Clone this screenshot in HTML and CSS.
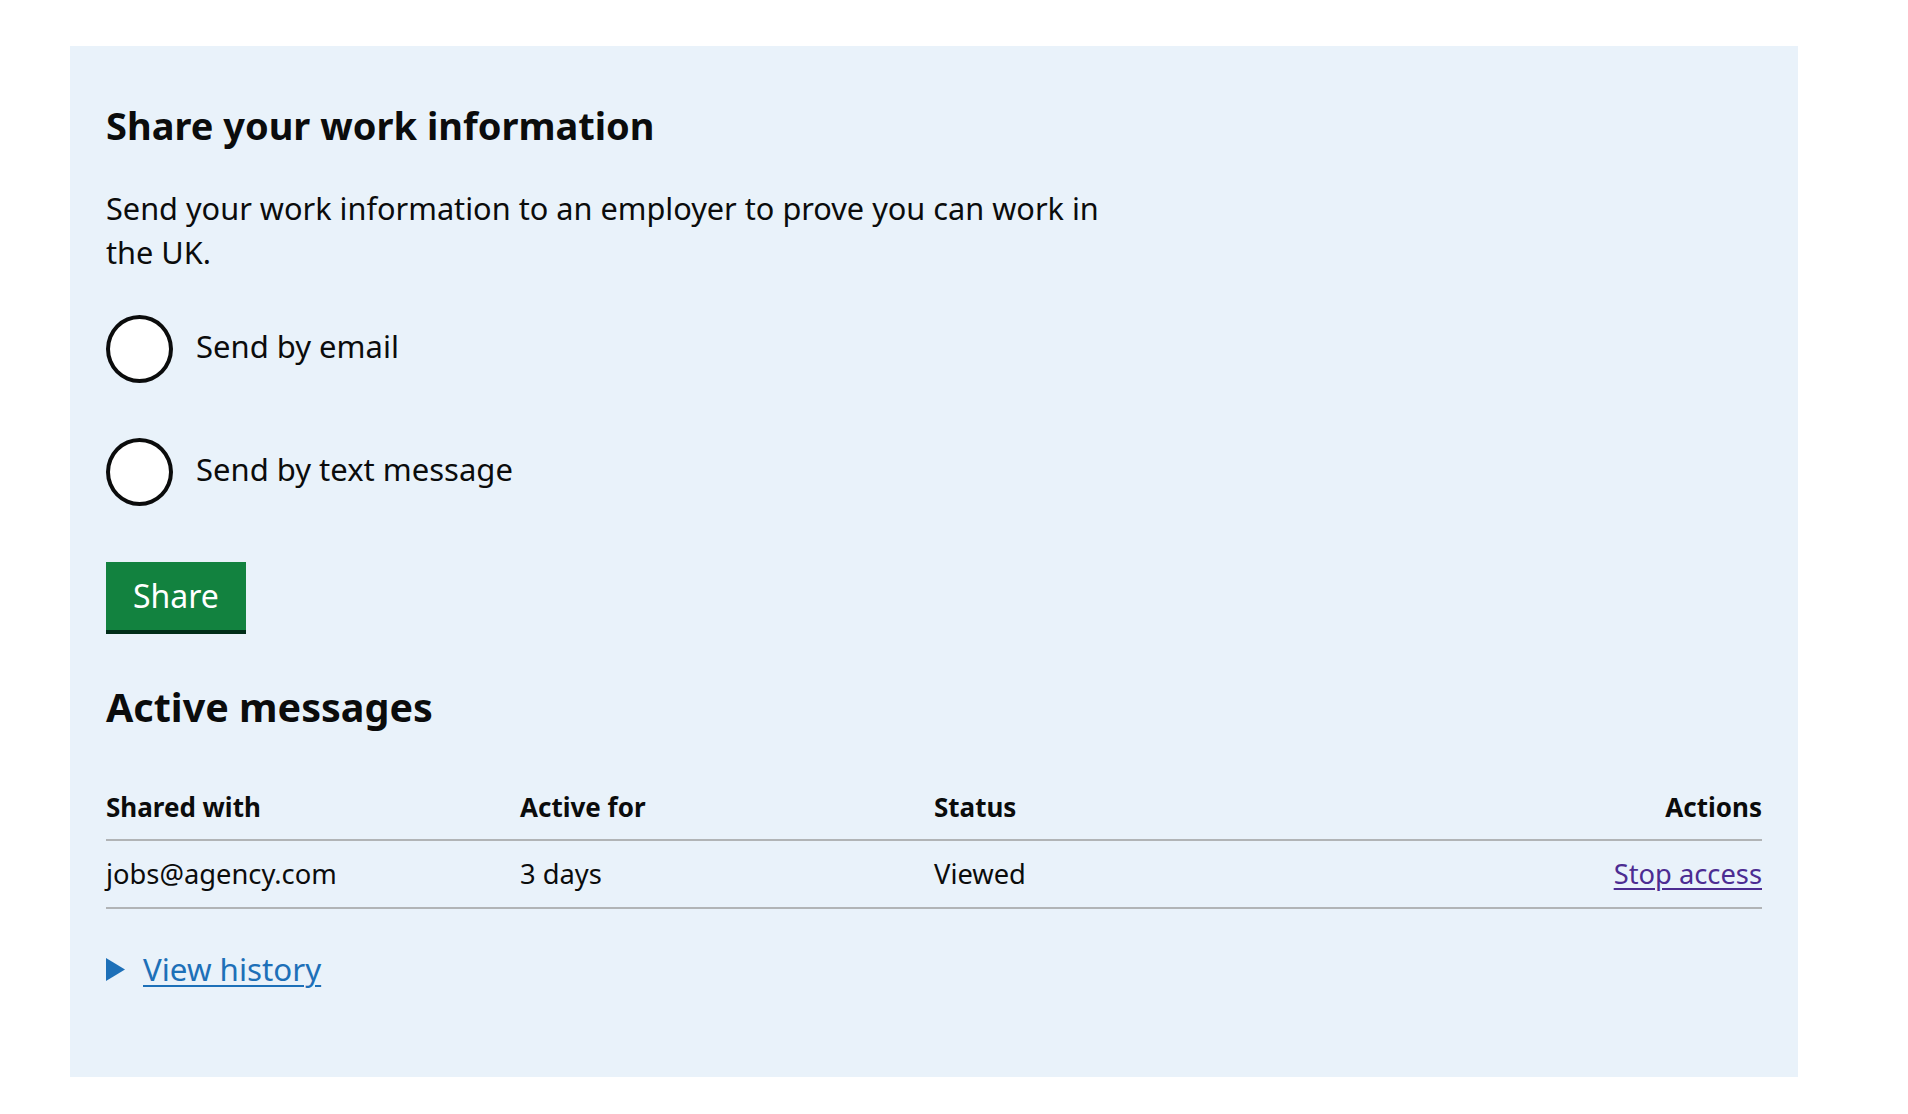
FILE: index.html
```html
<!DOCTYPE html>
<html lang="en">
<head>
<meta charset="utf-8">
<title>Share your work information</title>
<link rel="stylesheet" href="styles.css">
</head>
<body>
<div class="page">
  <section class="panel">
    <h1 class="heading-l">Share your work information</h1>
    <p class="lead">Send your work information to an employer to prove you can work in the UK.</p>
    <div class="radios">
      <label class="radio"><span class="radio-input"></span><span class="radio-label">Send by email</span></label>
      <label class="radio"><span class="radio-input"></span><span class="radio-label">Send by text message</span></label>
    </div>
    <button class="button" type="button">Share</button>
    <h2 class="heading-m">Active messages</h2>
    <table class="table">
      <thead>
        <tr><th>Shared with</th><th>Active for</th><th>Status</th><th class="num">Actions</th></tr>
      </thead>
      <tbody>
        <tr><td>jobs@agency.com</td><td>3 days</td><td>Viewed</td><td class="num"><a class="link-visited" href="#">Stop access</a></td></tr>
      </tbody>
    </table>
    <div class="details">
      <svg class="details-arrow" width="19" height="23" viewBox="0 0 19 23"><polygon points="0,0 19,11.5 0,23" fill="#1d70b8"/></svg>
      <a class="details-link" href="#">View history</a>
    </div>
  </section>
</div>
</body>
</html>
```

FILE: styles.css
```css
* { box-sizing: border-box; }
body {
  margin: 0;
  background: #ffffff;
  font-family: "Noto Sans", Arial, sans-serif;
  color: #0b0c0c;
}
.page {
  padding: 46px 0 0 70px;
}
.panel {
  width: 1728px;
  background: #e9f2fa;
  padding: 55px 36px 86px 36px;
}
.heading-l {
  margin: 0;
  font-size: 38px;
  line-height: 48px;
  font-weight: 700;
}
.lead {
  margin: 37px 0 0 0;
  width: 1010px;
  font-size: 30.7px;
  line-height: 44px;
}
.radios {
  margin-top: 41px;
  display: flex;
  flex-direction: column;
  gap: 55px;
}
.radio {
  display: flex;
  align-items: center;
  gap: 23px;
  font-size: 31px;
  line-height: 44px;
}
.radio-label {
  padding-bottom: 7px;
}
.radio-input {
  width: 67px;
  height: 68px;
  border: 4px solid #0b0c0c;
  border-radius: 50%;
  background: #ffffff;
  flex: none;
}
.button {
  display: block;
  margin-top: 56px;
  height: 72px;
  padding: 0 27px 4px 27px;
  border: 0;
  background: #12823f;
  box-shadow: inset 0 -4px 0 #002d18;
  color: #ffffff;
  font-family: inherit;
  font-size: 32px;
  line-height: 44px;
}
.heading-m {
  margin: 48px 0 0 0;
  font-size: 39.5px;
  line-height: 50px;
  font-weight: 700;
}
.table {
  margin-top: 41px;
  width: 100%;
  border-collapse: collapse;
  table-layout: fixed;
}
.table th, .table td {
  text-align: left;
  padding: 15px 0 15px 0;
  border-bottom: 2px solid #b1b4b6;
  line-height: 36px;
}
.table th {
  padding: 16px 0 14px 0;
  font-size: 26px;
  font-weight: 700;
}
.table td {
  font-size: 27.3px;
}
.table .num { text-align: right; }
.link-visited {
  color: #4c2c92;
  text-decoration: underline;
  text-underline-offset: 4px;
}
.details {
  margin-top: 38px;
  display: flex;
  align-items: center;
  gap: 18px;
}
.details-arrow { flex: none; }
.details-link {
  color: #1d70b8;
  font-size: 31.3px;
  line-height: 44px;
  text-decoration: underline;
  text-underline-offset: 4px;
  text-decoration-thickness: 2px;
}
```
